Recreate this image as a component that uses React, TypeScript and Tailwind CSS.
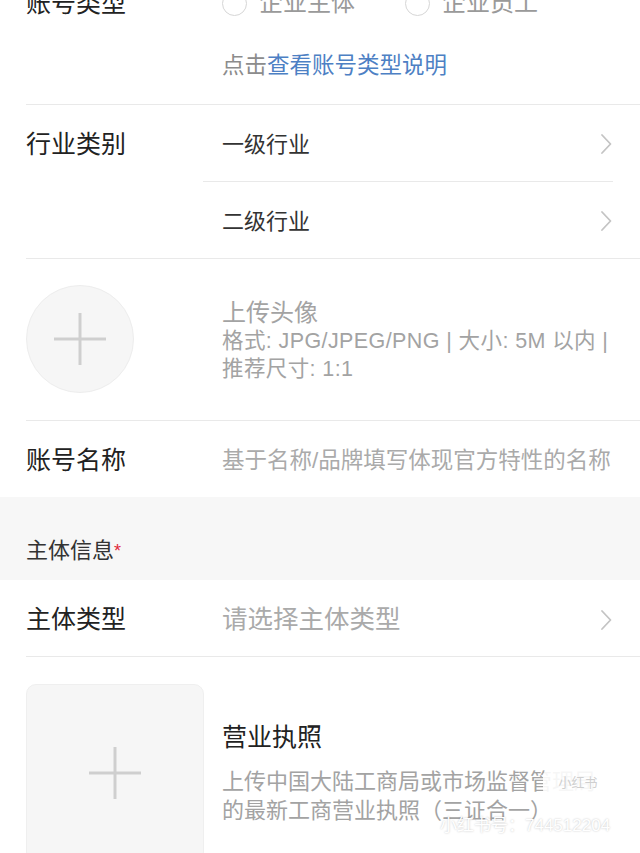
import React from 'react';

const Chevron = () => (
    <svg width="14" height="22" viewBox="0 0 14 22" fill="none" className="shrink-0">
        <path d="M3 2 L11.5 11 L3 20" stroke="#c4c4c4" strokeWidth="1.8" strokeLinecap="round" strokeLinejoin="round" />
    </svg>
);

const Radio = ({ label }: { label: string }) => (
    <div className="flex items-center gap-[12px]">
        <span className="block w-[25px] h-[25px] rounded-full border border-[#d6d6d6] bg-white" />
        <span className="text-[24px] text-[#9a9a9a]">{label}</span>
    </div>
);

const Plus = ({ size }: { size: number }) => (
    <svg width={size} height={size} viewBox="0 0 52 52">
        <path d="M0 26 H52 M26 0 V52" stroke="#cfcfcf" strokeWidth="3" />
    </svg>
);

const App = () => {
    return (
        <div className="relative w-[640px] h-[853px] overflow-hidden bg-white text-[#222] font-['Liberation_Sans','Noto_Sans_CJK_SC',sans-serif]">
            {/* 账号类型 */}
            <div className="ml-[26px] -mt-[15px] flex border-b border-[#e9e9e9] pb-[23px]">
                <div className="w-[196px] text-[25px] leading-[36px]">账号类型</div>
                <div className="flex flex-col">
                    <div className="h-[36px] flex items-center gap-[50px] leading-[36px]">
                        <Radio label="企业主体" />
                        <Radio label="企业员工" />
                    </div>
                    <div className="mt-[30px] text-[22.5px] leading-[30px] text-[#8c8c8c]">
                        点击<span className="text-[#4d80c4]">查看账号类型说明</span>
                    </div>
                </div>
            </div>

            {/* 行业类别 */}
            <div className="ml-[26px] pr-[27px] flex border-b border-[#e9e9e9]">
                <div className="w-[177px] h-[77px] pt-[3px] flex items-center text-[25px]">行业类别</div>
                <div className="flex-1 flex flex-col">
                    <div className="h-[77px] pl-[19px] pt-[2px] flex items-center justify-between border-b border-[#e9e9e9]">
                        <span className="text-[22px] text-[#333]">一级行业</span>
                        <Chevron />
                    </div>
                    <div className="h-[76px] pl-[19px] pt-[2px] flex items-center justify-between">
                        <span className="text-[22px] text-[#333]">二级行业</span>
                        <Chevron />
                    </div>
                </div>
            </div>

            {/* 头像 */}
            <div className="ml-[26px] pt-[26px] pb-[27px] flex items-center border-b border-[#e9e9e9]">
                <div className="w-[108px] h-[108px] rounded-full bg-[#f6f6f6] border border-[#ededed] flex items-center justify-center shrink-0">
                    <Plus size={52} />
                </div>
                <div className="ml-[88px] pt-[3px] flex flex-col text-[#a3a3a3]">
                    <div className="text-[24px] leading-[29px]">上传头像</div>
                    <div className="text-[21.5px] tracking-[0.4px] leading-[28px] whitespace-nowrap">格式: JPG/JPEG/PNG | 大小: 5M 以内 |</div>
                    <div className="text-[21.5px] tracking-[0.4px] leading-[28px]">推荐尺寸: 1:1</div>
                </div>
            </div>

            {/* 账号名称 */}
            <div className="ml-[26px] h-[76px] pt-[3px] flex items-center">
                <div className="w-[196px] text-[25px]">账号名称</div>
                <div className="text-[22.5px] text-[#aaa] whitespace-nowrap">基于名称/品牌填写体现官方特性的名称</div>
            </div>

            {/* 主体信息 */}
            <div className="bg-[#f7f7f7] pl-[26px] pt-[39px] pb-[14px]">
                <div className="text-[22px] leading-[30px] text-[#333]">
                    主体信息<span className="text-[#e0283a] text-[18px] align-top">*</span>
                </div>
            </div>

            {/* 主体类型 */}
            <div className="ml-[26px] pr-[27px] h-[77px] pt-[3px] flex items-center border-b border-[#e9e9e9]">
                <div className="w-[196px] text-[25px]">主体类型</div>
                <div className="flex-1 text-[25.5px] text-[#aaa]">请选择主体类型</div>
                <Chevron />
            </div>

            {/* 营业执照 */}
            <div className="ml-[26px] pt-[27px] flex">
                <div className="w-[178px] h-[178px] rounded-[10px] bg-[#f6f6f6] border border-[#efefef] flex items-center justify-center shrink-0">
                    <Plus size={52} />
                </div>
                <div className="ml-[18px] pt-[37px] flex flex-col">
                    <div className="text-[25px] leading-[32px] text-[#222]">营业执照</div>
                    <div className="mt-[14px] text-[22px] leading-[29px] text-[#a3a3a3]">
                        <div className="whitespace-nowrap">上传中国大陆工商局或市场监督管理局</div>
                        <div className="whitespace-nowrap">的最新工商营业执照（三证合一）</div>
                    </div>
                </div>
            </div>

            {/* 水印 */}
            <div className="absolute left-[543px] top-[769px] w-[70px] h-[28px] rounded-[7px] bg-white/90 text-[13px] leading-[28px] text-center text-[#cfcfcf]">
                小红书
            </div>
            <div className="absolute left-[440px] top-[814px] text-[17px] leading-[24px] text-white [text-shadow:0_0_2px_rgba(0,0,0,0.25)]">
                小红书号：744512204
            </div>
        </div>
    );
};

export default App;
